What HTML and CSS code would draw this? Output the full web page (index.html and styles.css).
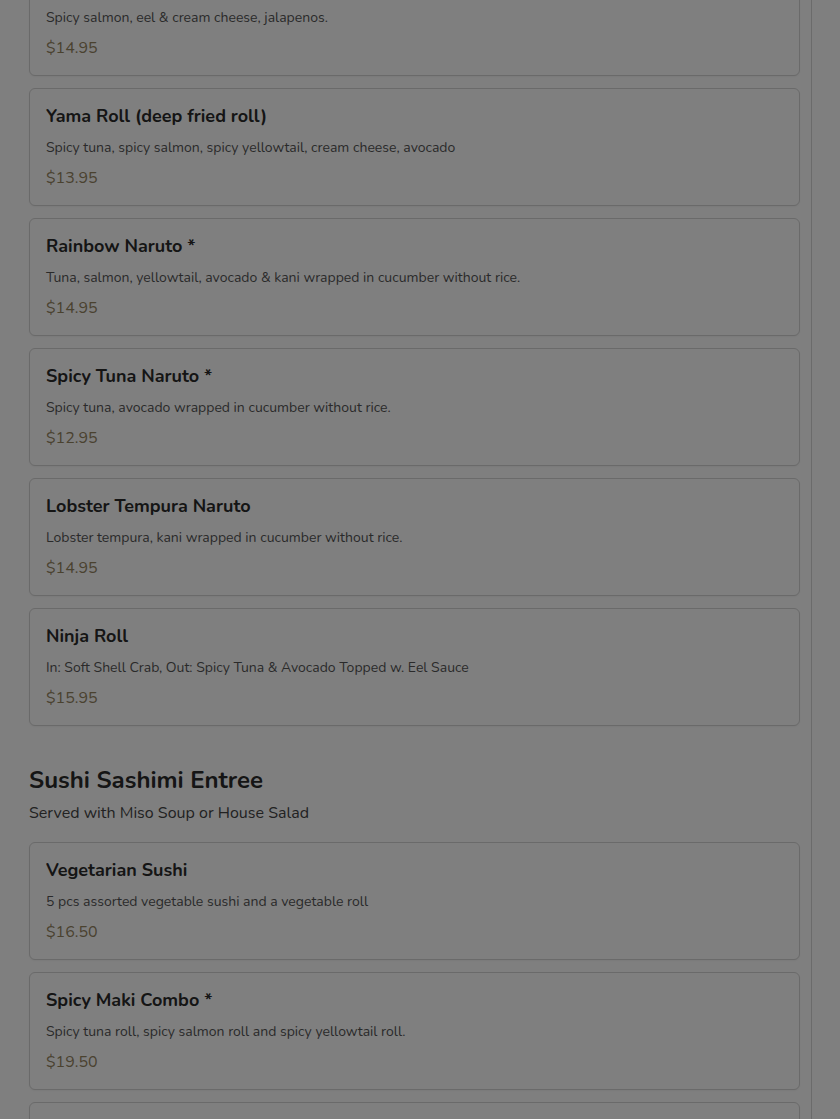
FILE: index.html
```html
<!DOCTYPE html>
<html lang="en">
<head>
<meta charset="utf-8">
<title>Menu</title>
<link rel="stylesheet" href="styles.css">
</head>
<body>
<div class="page">
  <main class="menu">
    <section class="section first">
      <div class="items">
        <article class="card">
          <h3 class="name">Volcano Roll</h3>
          <p class="desc">Spicy salmon, eel &amp; cream cheese, jalapenos.</p>
          <p class="price">$14.95</p>
        </article>
        <article class="card">
          <h3 class="name">Yama Roll (deep fried roll)</h3>
          <p class="desc">Spicy tuna, spicy salmon, spicy yellowtail, cream cheese, avocado</p>
          <p class="price">$13.95</p>
        </article>
        <article class="card">
          <h3 class="name">Rainbow Naruto *</h3>
          <p class="desc">Tuna, salmon, yellowtail, avocado &amp; kani wrapped in cucumber without rice.</p>
          <p class="price">$14.95</p>
        </article>
        <article class="card">
          <h3 class="name">Spicy Tuna Naruto *</h3>
          <p class="desc">Spicy tuna, avocado wrapped in cucumber without rice.</p>
          <p class="price">$12.95</p>
        </article>
        <article class="card">
          <h3 class="name">Lobster Tempura Naruto</h3>
          <p class="desc">Lobster tempura, kani wrapped in cucumber without rice.</p>
          <p class="price">$14.95</p>
        </article>
        <article class="card">
          <h3 class="name">Ninja Roll</h3>
          <p class="desc">In: Soft Shell Crab, Out: Spicy Tuna &amp; Avocado Topped w. Eel Sauce</p>
          <p class="price">$15.95</p>
        </article>
      </div>
    </section>
    <section class="section">
      <h2 class="section-title">Sushi Sashimi Entree</h2>
      <p class="section-sub">Served with Miso Soup or House Salad</p>
      <div class="items">
        <article class="card">
          <h3 class="name">Vegetarian Sushi</h3>
          <p class="desc">5 pcs assorted vegetable sushi and a vegetable roll</p>
          <p class="price">$16.50</p>
        </article>
        <article class="card">
          <h3 class="name">Spicy Maki Combo *</h3>
          <p class="desc">Spicy tuna roll, spicy salmon roll and spicy yellowtail roll.</p>
          <p class="price">$19.50</p>
        </article>
        <article class="card">
          <h3 class="name">Sushi Regular</h3>
          <p class="desc">8 pcs assorted sushi and a California roll</p>
          <p class="price">$21.95</p>
        </article>
      </div>
    </section>
  </main>
</div>
<div class="backdrop"></div>
</body>
</html>
```
FILE: styles.css
```css
* { box-sizing: border-box; }
html, body { margin: 0; padding: 0; }
body {
  background: #ffffff;
  font-family: "Nunito", "Lato", "Open Sans", sans-serif;
  color: #333;
  overflow: hidden;
}
.page {
  width: 812px;
  border-right: 1px solid #d6d6d6;
  padding: 0 11px 0 29px;
  margin-top: -42px;
}
.items {
  display: flex;
  flex-direction: column;
  gap: 12px;
}
.card {
  border: 1px solid #d4d4d4;
  border-radius: 6px;
  padding: 17px 16px 17px;
  background: #fff;
  box-shadow: 0 1px 2px rgba(0,0,0,0.05);
}
.name {
  margin: 0;
  font-size: 18px;
  line-height: 20px;
  font-weight: 700;
  color: #2b2b2b;
}
.desc {
  margin: 12px 0 0;
  font-size: 14px;
  line-height: 20px;
  color: #555;
}
.price {
  margin: 10px 0 0;
  font-size: 16px;
  line-height: 20px;
  color: #94845f;
}
.section + .section { margin-top: 38px; }
.section-title {
  margin: 0;
  font-size: 24px;
  line-height: 32px;
  font-weight: 700;
  color: #2b2b2b;
}
.section-sub {
  margin: 6px 0 18px;
  font-size: 16px;
  line-height: 22px;
  color: #444;
}
.backdrop {
  position: fixed;
  inset: 0;
  background: rgba(0,0,0,0.5);
}
```
